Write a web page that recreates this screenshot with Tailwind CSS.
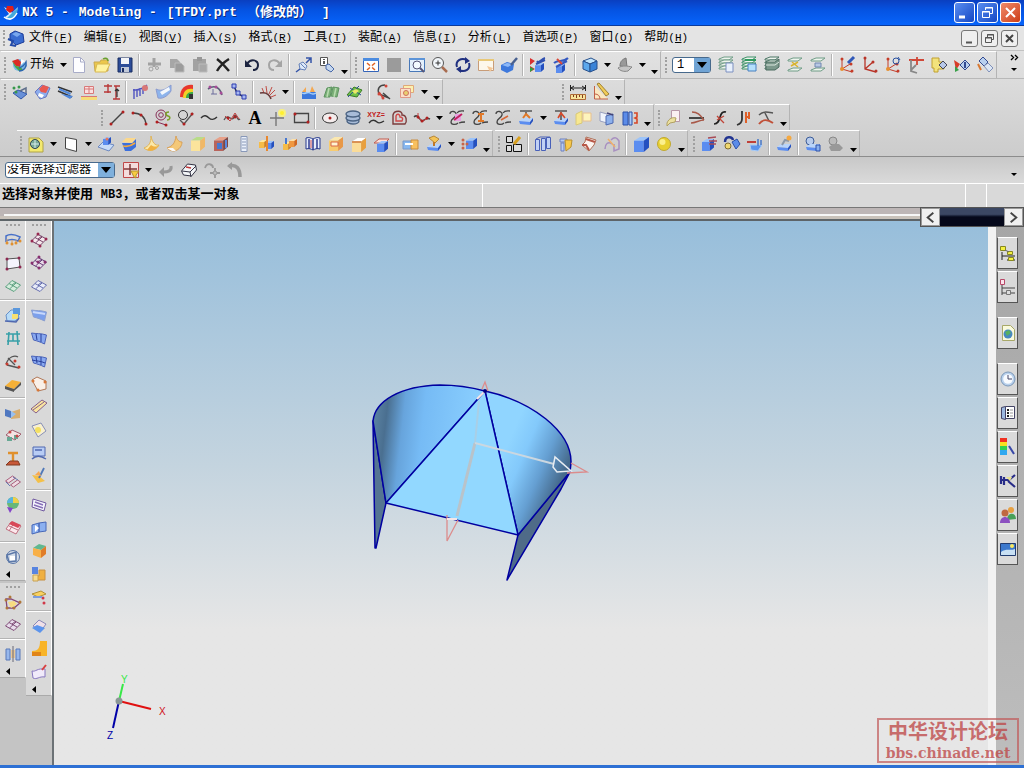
<!DOCTYPE html>
<html lang="zh-CN">
<head>
    <meta charset="utf-8" />
    <title>NX 5 - Modeling</title>
    <script src="https://cdn.jsdelivr.net/npm/@tailwindcss/browser@4"></script>
</head>

<body class="h-screen flex flex-col overflow-hidden bg-[#d3d3d3] text-black text-[12px] font-['Liberation_Mono','Noto_Sans_CJK_SC',monospace]">

    <!-- title bar -->
    <header class="h-[26px] shrink-0 flex items-center pl-0.5 pr-[3px] bg-linear-to-b from-[#0a3fc0] via-[#0553e2] via-40% to-[#0764fb] border-b border-[#0a3a9c] text-white">
        <span data-icon="nx" class="w-[18px] h-[18px]"></span>
        <h1 class="flex gap-2.5 pl-0.5 text-[13px] leading-none font-bold whitespace-pre [text-shadow:1px_1px_#0a2a80]"><span>NX 5 -</span><span>Modeling -</span><span>[TFDY.prt</span><span>（修改的）</span><span>]</span></h1>
        <div class="ml-auto flex gap-0.5">
            <button aria-label="最小化" class="w-[21px] h-[21px] rounded-[3px] border border-white bg-linear-to-br from-[#5a8df0] to-[#1546c4]"><svg viewBox="0 0 19 19"><path d="M4 14h6" stroke="#fff" stroke-width="3"/></svg></button>
            <button aria-label="还原" class="w-[21px] h-[21px] rounded-[3px] border border-white bg-linear-to-br from-[#5a8df0] to-[#1546c4]"><svg viewBox="0 0 19 19" fill="none" stroke="#fff"><path d="M7.500 7V4.500h7v6h-3M4.500 8.500h7v6h-7zM4 9h8M7 5h8"/></svg></button>
            <button aria-label="关闭" class="w-[21px] h-[21px] rounded-[3px] border border-white bg-linear-to-br from-[#f08a68] to-[#cc3a10]"><svg viewBox="0 0 19 19"><path d="M5 5l9 9M14 5l-9 9" stroke="#fff" stroke-width="2"/></svg></button>
        </div>
    </header>

    <!-- menu bar -->
    <nav class="h-6 shrink-0 flex items-center pl-[3px] pr-1.5 bg-[#e4e4e4]">
        <span class="w-1 h-4 border-l-2 border-dotted border-[#a0a0a0]"></span>
        <span data-icon="part" class="w-[18px] h-[18px]"></span>
        <div id="menus" class="flex gap-[11px] pl-1"></div>
        <div class="ml-auto flex gap-[3px]">
            <button aria-label="最小化窗口" class="w-[17px] h-[17px] rounded-[3px] border border-[#777] bg-[#efefef]"><svg viewBox="0 0 15 15"><path d="M4 11.500h6" stroke="#555" stroke-width="2"/></svg></button>
            <button aria-label="还原窗口" class="w-[17px] h-[17px] rounded-[3px] border border-[#777] bg-[#efefef]"><svg viewBox="0 0 15 15" fill="none" stroke="#555"><path d="M5.500 6V3.500h6v5h-2M3.500 6.500h6v5h-6zM3 7h7M5 4h7"/></svg></button>
            <button aria-label="关闭窗口" class="w-[17px] h-[17px] rounded-[3px] border border-[#777] bg-[#efefef]"><svg viewBox="0 0 15 15"><path d="M4 4l7 7M11 4l-7 7" stroke="#444" stroke-width="2"/></svg></button>
        </div>
    </nav>

    <!-- toolbars -->
    <div class="shrink-0 bg-linear-to-b from-[#e2e2e2] to-[#cccccc]">
        <div class="h-7 flex gap-px pl-px border-t border-[#c2c2c2]">
            <div data-bar="start new open save | cut copy paste delete | undo redo | orient info end"></div>
            <div data-bar="fit blank zoomwin zoom rotate pan shade | replay replay2 | cube drop section drop end"></div>
            <div data-bar="layer layers layers2 layers3 layers4 layers5 | csys csys1 csys2 csys3 csys4 csys5 csys6"></div>
            <div class="ml-auto w-5 flex flex-col items-center pt-0.5">
                <svg class="w-4 h-5" viewBox="0 0 16 20"><path d="M5 2l2.500 2.500L5 7M9 2l2.500 2.500L9 7" fill="none" stroke="#000" stroke-width="1.400"/><path d="M5 15h6l-3 3z"/></svg>
            </div>
        </div>
        <div class="h-[26px] flex pl-px gap-[116px] border-t border-[#b8b8b8]">
            <div data-bar="feat1 feat2 feat3 feat4 dims | comb blend rainbow | arcpt nodes | fan drop | pool greens leaf | hook tags drop end"></div>
            <div data-bar="measure angle end"></div>
        </div>
        <div class="h-[26px] flex gap-px pl-[98px]">
            <div data-bar="line arc spiral tangent wave spline text point rect | ellipse helix law offset wave2 drop bridge bridge2 bridge3 project drop project2 mirror wrap extract end"></div>
            <div data-bar="editcv trim divide stretch smooth end"></div>
        </div>
        <div class="h-[26px] flex gap-0.5 pl-[17px]">
            <div data-bar="sketch drop plane drop extrude revolve sweep sweep2 block hole slot boss rib book pocket shell chamfer | thread emboss drop pattern end"></div>
            <div data-bar="group | split thicken patch patch2 | bluebox ball end"></div>
            <div data-bar="unite subtract intersect | stamp | gears gearsoff end"></div>
        </div>
    </div>

    <!-- selection filter -->
    <div class="h-[27px] shrink-0 flex items-center pl-[5px] pr-0.5 border-t border-[#8c8c8c] bg-linear-to-b from-[#c8c8c8] to-[#dadada]">
        <div class="relative w-[110px] h-4">
            <select aria-label="选择过滤器" class="block appearance-none w-full h-4 rounded-[3px] border border-[#47698c] bg-white pl-px text-[12px] leading-3"><option>没有选择过滤器</option></select>
            <svg class="absolute right-px top-px w-4 h-3.5 pointer-events-none" viewBox="0 0 16 14"><path fill="#7fb0dc" d="M0 0h16v14H0z"/><path d="M3 4h10l-5 6z"/></svg>
        </div>
        <div data-tools="filter drop back eraser snap snap2" class="flex items-center h-full pl-1"></div>
        <svg class="ml-auto w-4 h-4" viewBox="0 0 16 16"><path d="M5 11h6l-3 3z"/></svg>
    </div>

    <!-- prompt -->
    <div class="h-6 shrink-0 flex border-t border-white bg-[#d9d9d9]">
        <p class="w-[483px] pl-0.5 text-[13px] leading-[22px] font-bold border-r border-white whitespace-nowrap">选择对象并使用 <span class="text-[12px]">MB3</span>，或者双击某一对象</p>
        <p class="flex-1"></p>
        <p class="w-[21px] border-l border-white"></p>
        <p class="w-[38px] border-l border-white"></p>
    </div>

    <div class="relative h-[14px] shrink-0 border-t border-[#777] bg-[#bdb6b6] flex flex-col justify-end">
        <i class="h-0.5 bg-[#f6f6f6] ml-1"></i>
        <i class="h-[3px] bg-[#c9c2ba]"></i>
        <i class="h-0.5 bg-[#5d6468]"></i>
        <div class="absolute right-0 -top-px z-10 w-[104px] h-5 flex border border-[#555] bg-linear-to-b from-[#3b4763] from-35% to-[#05081a] to-50%">
            <button aria-label="向左" class="w-[19px] bg-[#f0f0f0] border border-[#999]"><svg viewBox="0 0 18 18"><path d="M12 4L6 9l6 5" fill="none" stroke="#444" stroke-width="2"/></svg></button>
            <button aria-label="向右" class="ml-auto w-[19px] bg-[#f0f0f0] border border-[#999]"><svg viewBox="0 0 18 18"><path d="M6 4l6 5-6 5" fill="none" stroke="#444" stroke-width="2"/></svg></button>
        </div>
    </div>

    <main class="relative flex-1 min-h-0 flex border-b-[3px] border-[#2d70d4]">
        <!-- left docks -->
        <div class="w-[54px] shrink-0 flex bg-[#c4c4c4] border-r-2 border-[#6c7276]">
            <div class="w-[26px] flex flex-col gap-0.5">
                <div data-dock="v1 v2 v3 | v4 v5 v6 v7 | v8 v9 v10 v11 v12 v13 | v14 end"></div>
                <div data-dock="v15 v16 | v17 end"></div>
            </div>
            <div class="w-[26px] flex flex-col">
                <div data-dock="w1 w2 w3 | w4 w5 w6 w7 w8 w9 w10 w11 | w12 w13 w14 w15 w16 | w17 w18 w19 end"></div>
            </div>
        </div>

        <!-- graphics window -->
        <div class="flex-1 min-w-0 bg-linear-to-b from-[#97bedb] via-[#c4d4df] via-45% to-[#e6e6e6] to-75%">
            <svg class="w-full h-full" viewBox="54 221 934 544" preserveAspectRatio="xMinYMin meet">
                <defs>
                    <linearGradient id="gl" gradientUnits="userSpaceOnUse" x1="373" y1="440" x2="478" y2="452">
                        <stop offset="0" stop-color="#587f9f"/><stop offset=".1" stop-color="#4a6f90"/><stop offset=".26" stop-color="#67a4dc"/><stop offset=".45" stop-color="#76bbf5"/><stop offset="1" stop-color="#8bd0ff"/>
                    </linearGradient>
                    <linearGradient id="gr" gradientUnits="userSpaceOnUse" x1="503" y1="455" x2="561" y2="480">
                        <stop offset="0" stop-color="#90d5ff"/><stop offset=".3" stop-color="#83c9fb"/><stop offset=".65" stop-color="#659fd2"/><stop offset="1" stop-color="#466a8c"/>
                    </linearGradient>
                </defs>
                <g stroke="#0000a0" stroke-width="1.500" stroke-linejoin="round">
                    <path fill="#557592" d="M373 421l2 127h1l10-45z"/>
                    <path fill="#4f6b88" d="M518 535l-11 45 54-91 9-17z"/>
                    <path fill="url(#gl)" d="M373 421c2-20 27-35 67-36 16 0 30 2 45 6L386 503z"/>
                    <path fill="url(#gr)" d="M485 391c46 10 87 40 86 72l-1 9-52 63z"/>
                    <path fill="#92d8ff" d="M485 391L386 503l132 32z"/>
                </g>
                <g fill="none">
                    <path d="M475 443l-18 73" stroke="#b9c3ca" stroke-width="3"/>
                    <path d="M475 443l4-42" stroke="#a9cfe6" stroke-width="2"/>
                    <path d="M475 443l79 21" stroke="#cbd7e0" stroke-width="2"/>
                    <path d="M555 457l-2 10 4 5 14-1z" stroke="#e8edf2" stroke-width="1.500"/>
                    <path d="M571 463l16 9-20 1M447 515v26l11-21M482 389l3-7 3 9" stroke="#dc8c8c" stroke-width="1.300"/>
                    <path d="M486 390l-9 9M447 519h10" stroke="#f6e6e6" stroke-width="2"/>
                </g>
                <circle cx="485" cy="391" r="2" fill="#000080"/>

                <g stroke-width="2">
                    <path d="M119 701l32 8" stroke="#e01010"/><path d="M119 701l4-17" stroke="#38e848"/><path d="M119 701l-6 27" stroke="#0000a8"/>
                </g>
                <circle cx="119" cy="701" r="3.500" fill="#8b9796"/>
                <g class="text-[10px] font-['Liberation_Sans',sans-serif]">
                    <text x="159" y="715" fill="#d01020">X</text><text x="121" y="683" fill="#38e848">Y</text><text x="107" y="739" fill="#0000a8">Z</text>
                </g>
            </svg>
        </div>

        <!-- resource bar -->
        <div class="w-9 shrink-0 border-l-[8px] border-[#f2f2f2] bg-linear-to-b from-[#a6a6a6] to-[#bdbdbd] pt-4 pl-px flex flex-col gap-3.5">
            <div data-tabs="navasm navpart" class="flex flex-col gap-0.5"></div>
            <div data-tabs="web" class="flex flex-col gap-0.5"></div>
            <div data-tabs="clock roles palette process people scene" class="flex flex-col gap-0.5"></div>
        </div>

        <!-- forum stamp -->
        <div class="absolute right-[5px] bottom-0.5 w-[142px] h-[45px] border-2 border-[#c05a5a]/70 text-[#bd4444]/75 flex flex-col items-center justify-center font-bold">
            <p class="text-[20px] leading-6 font-['Noto_Sans_CJK_SC',sans-serif]">中华设计论坛</p>
            <p class="text-[14px] leading-5 font-['DejaVu_Serif',serif]">bbs.chinade.net</p>
        </div>
    </main>

    <script>
        // stroke, fill and dot helpers for the 18x18 icons
        const p = (d, s = '#333', w = 1) => `<path d="${d}" fill="none" stroke="${s}" stroke-width="${w}"/>`
        const a = (d, f, s = 'none') => `<path d="${d}" fill="${f}" stroke="${s}"/>`
        const o = (x, y, r, f, s = 'none') => `<circle cx="${x}" cy="${y}" r="${r}" fill="${f}" stroke="${s}"/>`
        const dots = (list, f) => list.map(([x, y]) => o(x, y, 1.5, f)).join('')
        const BLUE = ['#9cc4fa', '#5b8df0', '#2450c0'], GOLD = ['#ffe9a0', '#f6bc48', '#cf8220']
        const box = (x, y, s, c = BLUE) => a(`M${x} ${y + s * .25}l${s * .4}-${s * .25}h${s * .6}l-${s * .35} ${s * .25}z`, c[0]) +
            a(`M${x} ${y + s * .25}h${s * .65}v${s * .75}h-${s * .65}z`, c[1]) + a(`M${x + s * .65} ${y + s * .25}l${s * .35}-${s * .25}v${s * .7}l-${s * .35} ${s * .3}z`, c[2])
        const tray = (f = '#5b8df0') => a('M2 12l4-3h10l-3 4z', '#b8d4fa') + a('M2 12l11 1v3L3 15z', f) + a('M13 13l3-4v3l-3 4z', '#2450c0')
        const sheet = (f, s) => a('M1.500 10L8 3.500 16.500 8 10 14.500z', f, s)
        const mesh = (f, s) => sheet(f, s) + p('M5 6.500l8 4.500M12 6l-6.500 6M8 8l4-3', s)
        const curved = (f, s) => a('M1.500 4c5 1 9 0 15 2l-2 9c-4-2-7-3-11-4z', f, s)
        const layers = (c = '#6f9c86') => [3, 6, 9, 12].map(y => a(`M2 ${y}l5-2h9l-4 3H2z`, '#eef4ee', c)).join('')
        const axes = (c = '#c43c28') => p('M4 3v10l10 3M4 13l8-5', c) + dots([[4, 3], [13, 8], [14, 15]], c) + o(4, 13, 2, '#e89030')
        const curl = p('M2 5c0-4 7-3 6 1S3 9 3 13c0 3 5 3 7 1M9 4c2-3 5-2 7-2M11 14c2-1 4-1 6-1', '#444', 1.3)

        const icons = {
            nx: a('M2 3l6 3 2 3 6-6-2 7-6 6-5-3 4-3z', '#d8eefc') + a('M5 2h6l1 4-4 3-4-3z', '#e0201c') + a('M10 9l6-5-1 5-5 6-5-1z', '#43a9dc') + p('M2 13c5 4 10 2 13-4', '#fff', 1.5),
            globe: o(9, 9, 6, '#78b8e8') + a('M2 5l6-2 3 3-1 5-4-1z', '#dc2c24') + a('M2 5l3 6 4 4 4 0-2-4-5-1z', '#48a848') + p('M9 15c5 0 8-4 7-9-2 4-4 5-7 6', '#2c68b0', 1.5) + a('M11 3l4 2-4 4z', '#fff'),
            part: a('M3 5l5-3 8 3 1 8-8 3-6-5z', '#3a6cd0', '#1c3c98') + a('M5 5l4-2 5 2-4 3z', '#7aa8ee') + p('M1 10l5 2-2 4 5 1', '#234aa8', 2),
            new: a('M3.500 1.500h7l4 4v11h-11z', '#fdfdff', '#a8acc8') + p('M10.500 2v4h4', '#a8acc8'),
            open: a('M1 6h6l1-2h7v11H2z', '#ecc84c', '#c8a850') + a('M4 8h13l-4 8H2z', '#fff3a0', '#d8b850') + p('M10 3c3-2 5 0 5 2', '#68a030', 1.5),
            save: a('M2 2h14v14H2z', '#2c4c98', '#182c60') + a('M5 2h8v6H5z', '#f2f4f8') + a('M5 11h8v5H5z', '#c0c8d8') + a('M6 12h2v4H6z', '#182c60'),
            cut: p('M9 2v9M3 8h13', '#a2a2a2', 3) + o(6, 13, 2, 'none', '#a2a2a2') + o(12, 12, 1.5, 'none', '#a2a2a2'),
            copy: a('M2 3h7l3 3v6H2z', '#a6a6a6') + a('M7 7h6l3 3v6H7z', '#9c9c9c', '#bbb'),
            paste: a('M2 3h13v12H2z', '#a2a2a2') + a('M6 1h5v4H6z', '#979797') + a('M8 8h8v8H8z', '#a8a8a8', '#bbb'),
            delete: p('M3 3c4 3 8 7 12 12M15 3C10 6 6 10 3 15', '#222', 2.4),
            undo: p('M4 8c4-6 11-4 11 1 0 3-2 5-5 5', '#1c2440', 2) + a('M2 4v7h7z', '#1c2440'),
            redo: p('M14 8C10 2 3 4 3 9c0 3 2 5 5 5', '#a4a4a4', 2) + a('M16 4v7H9z', '#a4a4a4'),
            orient: a('M4 8l4-2 4 4-2 4-5-1z', '#dce8f8', '#6480b8') + p('M1 16l4-3M11 7l5-5M11 2h5v5', '#3454a8', 1.5) + p('M6 8l4 4', '#6480b8'),
            info: a('M2.500 1.500h7v8h-7z', '#fff', '#555') + p('M6 3v1M6 5v3', '#222', 1.5) + a('M8 9l3-1 5 5-3 3-5-3z', '#c4d6ee', '#4868a8'),
            fit: a('M1.500 2.500h15v13h-15z', '#fff', '#3464b8') + a('M1 2h16v3H1z', '#4c8ce0') + p('M5 7l8 7M13 7l-8 7', '#e06020', 1.5) + o(9, 10.500, 1.5, '#fff'),
            blank: a('M2 2h14v14H2z', '#9b9b9b'),
            zoomwin: a('M1.500 2.500h15v13h-15z', '#e4f0fc', '#4878b8') + a('M1 2h16v2H1z', '#5c94d8') + o(9, 9, 4, '#f4faff', '#557') + p('M12 12l4 4', '#557', 2),
            zoom: o(7, 7, 5.5, '#f2f6fa', '#555') + p('M4.500 7h5M7 4.500v5', '#333') + p('M11 11l5 5', '#a86c50', 2.5),
            rotate: p('M3 11C1 5 7 1 13 4M15 7c2 6-4 10-10 7', '#203080', 2) + a('M11 1l5 4-5 3zM7 17l-5-4 5-3z', '#203080'),
            pan: a('M1.500 3.500h15v11h-15z', '#fdf8ec', '#c89c78') + a('M1 3h16v2H1z', '#e8c878') + a('M10 10l6 2-3 4z', '#f4c898'),
            shade: a('M1 9l6-3 7 2-1 6-6 3-6-3z', '#3d78dc') + a('M2 9l5-2 6 1-5 3z', '#8cb8f8') + p('M11 9l6-7', '#486090', 2.5),
            replay: a('M1 2l5 3-5 4zM1 10l5 3-5 3z', '#d83030') + a('M1 11l4 2-4 3z', '#30a040') + box(6, 7, 9) + p('M8 5c2 3 4-2 8-3M7 8l9-4', '#3050b0', 2),
            replay2: box(4, 8, 9) + p('M2 7c4-4 9 0 14-5M4 11l11-6', '#3458c0', 2) + p('M5 3l5 5', '#d84838', 2),
            cube: a('M2 5l8-3 6 3-7 3z', '#c0e4fc', '#28508c') + a('M2 5l7 3v8l-7-3z', '#5ca8ec', '#28508c') + a('M9 8l7-3v8l-7 3z', '#3a84d8', '#28508c'),
            section: a('M4 10c0-5 3-7 6-8l1 9z', '#999', '#777') + a('M2 12c4-3 10-2 14-1l-4 4c-4 1-8 0-10-3z', '#c4c4c4', '#888'),
            layers: layers() + a('M9 7h7v9H9z', '#e8f0fc', '#7c90c0'),
            layers2: layers('#3c9068') + a('M8 8h8v7H8z', '#b4e0fc', '#4880c0') + p('M5 4h11', '#2f9a60', 2),
            layers3: layers('#4a7464') + a('M3 6h9l4-3v8l-4 3H3z', '#7c988c', '#4c6c60') + p('M3 9h9l4-3', '#dce8e0'),
            layers4: a('M2 4l5-2h9l-4 3H2zM2 14l5-2h9l-4 3H2z', '#eef4ee', '#6f9c86') + p('M6 6l6 5M12 6l-7 4', '#d8b430', 1.5),
            layers5: a('M2 4l5-2h9l-4 3H2zM2 14l5-2h9l-4 3H2z', '#eef4ee', '#6f9c86') + a('M6 7h6v4H6z', '#b8c8e4', '#7088b0'),
            csys: axes() + p('M10 7l6-6', '#3058b8', 3), csys1: p('M4 2v11l11 3M4 13l8-7', '#b83428', 1.3) + dots([[4, 2], [12, 6], [15, 15]], '#b83428'),
            csys2: axes() + o(12, 5, 3, 'none', '#2850a0') + p('M14 1l2 3', '#2850a0'), csys3: p('M2 4h15M10 1v8', '#d04838', 1.8) + p('M4 4v11l6 2M4 14l5-5', '#888', 1.8),
            csys4: a('M2 2h7v4h5v7H8v3H4v-4H2z', '#f2e27c', '#c0a030') + a('M9 9l4-4 4 4-4 4z', '#b8c8e8', '#445'),
            csys5: a('M1 4l6 4-4 6z', '#d83c28') + a('M2 10l4 4-4 2z', '#38a048') + a('M7 9l5-5 5 5-5 5z', '#b8d0f0', '#344a90') + p('M12 6v6', '#344a90', 2),
            csys6: a('M3 5l4-4 5 5-4 4z', '#b8d0f0', '#344a90') + a('M8 10l4-3 5 5-4 4z', '#dce6f4', '#8090b8') + p('M2 8l3 6', '#d87830', 2),

            feat1: a('M2 10l5-3 9 4-6 5z', '#6890d8', '#3458a8') + dots([[3, 5], [8, 4], [5, 9]], '#38984c') + p('M9 8l6-3v5', '#60708c', 1.5),
            feat2: a('M1 9l7-7 8 3-4 9-6 2z', '#8cacec', '#6878c0') + a('M5 6l4-4 6 2-3 6-5-1z', '#e85850') + a('M5 10l5 2-2 3-4-2z', '#fff'),
            feat3: p('M1 4l14 5M1 8l14 6', '#333', 1.5) + a('M2 5l12 5-1 2L2 7zM4 11l12 2-3 3z', '#5088dc'),
            feat4: a('M4.500 3.500h9v7h-9z', '#fbe0e0', '#d87878') + p('M1 13.500h16M4 6h9M9 4v7', '#d87878') + a('M1 14h16v3H1z', '#f6dc78'),
            dims: p('M1 3h8M5 1v9M1 9h7M11 3h6M13 3v13M10 16h7', '#b83838', 1.4) + p('M14 6v8M12 8l2-2 2 2', '#333', 1.2),
            comb: p('M2 6v10M5 6v8M8 5v8M11 4v7M14 2v5M1 7c6 0 10-1 14-5', '#5054c0', 1.4) + o(13, 5, 3, '#d87878'),
            blend: a('M1 6c6 3 10 0 15-4v6c-4 6-9 8-13 7z', '#8cb4ec', '#8c9cd0') + a('M5 9l9-5 1 3-8 5z', '#f4f8fc'),
            rainbow: a('M2 14C2 5 8 1 15 2v13z', '#e8382c') + a('M5 15c0-7 4-10 10-9v9z', '#f4d028') + a('M8 15c0-5 3-6 7-6v6z', '#3cac48') + a('M11 11h4v5h-4z', '#333'),
            arcpt: p('M1 6c7-5 12-1 14 6', '#5c5c78', 1.6) + dots([[3, 4], [9, 4], [14, 10]], '#a84c98') + p('M6 6v5M4 11h6', '#6c6c9c'),
            nodes: p('M4 3l3 7 7 4', '#222c68', 1.5) + a('M2 1h4v4H2zM6 8h4v4H6zM12 12h4v4h-4z', '#a8b8f0', '#2c3cb0'),
            fan: p('M5 10L3 5M8 10L7 3M10 11l3-7M11 12l5-5M12 14l5-2', '#c04c44') + p('M1 10c5-1 9 0 11 6', '#663838', 1.5),
            pool: a('M2 9h14v7H2z', '#3c78dc') + a('M2 9l4-5v5zM10 9l2-6 3 6z', '#f4a850') + p('M2 10c3 2 5-2 8 0s4 1 6 0', '#a8d0f8', 1.5),
            greens: a('M1 14L4 5l5-1-2 10zM8 13l2-9 6 1-2 9z', '#7cb078', '#5c9460') + p('M6 5L4 14M13 5l-2 9', '#b8dcb0', 1.5),
            leaf: a('M1 12l7-8 8 3-5 7z', '#70c048', '#3c7c28') + p('M2 14l11-11M4 5l11 7', '#2c5494') + a('M6 8l4-2 3 2-4 3z', '#ece868'),
            hook: p('M10 2C4 2 2 6 4 11l10 4M8 10l7 6', '#444', 1.5) + dots([[11, 3], [4, 11], [8, 15]], '#d04438') + p('M4 9l4 6', '#d04438', 1.5),
            tags: a('M5.500 2.500h10v7h-10z', '#fbf0b0', '#e0a878') + a('M2.500 5.500h10v9h-10z', '#fadfc8', '#e09888') + o(8, 10, 2.5, '#e8d070', '#d07060'),
            measure: p('M1.500 2v6M16.500 2v6M2 5h14M5 3L2 5l3 2M13 3l3 2-3 2', '#222') + a('M1.500 11.500h15v5h-15z', '#f8e49c', '#b06c38') + p('M4.500 12v2M7.500 12v3M10.500 12v2M13.500 12v3', '#803c20'),
            angle: a('M2.500 3v13H16', '#fbe8c0', '#c06048') + a('M5 1l2-1 10 11-3 2z', '#f0cc58', '#a08030') + p('M3 11c3 0 5 2 5 5', '#c06048'),

            line: p('M3 15L15 3', '#444', 1.4) + dots([[3, 15], [15, 3]], '#b02020'),
            arc: p('M2 4c8 0 12 4 13 11', '#444', 1.4) + dots([[2, 4], [10, 6], [15, 15]], '#b02020'),
            spiral: o(7, 6, 5, 'none', '#883058') + o(7, 6, 2.3, 'none', '#883058') + p('M3 13l9 3', '#883058') + p('M15 3c-4 0-4 3-1 4s2 4-1 4', '#7aa028', 1.5) + dots([[3, 13], [12, 16]], '#b02020'),
            tangent: o(6, 6, 4.5, 'none', '#333') + p('M16 4l-9 11-4-4', '#555', 1.3) + dots([[15, 5], [7, 15]], '#b02020'),
            wave: p('M1 9c3-4 6-2 8 0s5 2 8-1', '#333', 1.4),
            spline: p('M1 11c4-8 8 3 10-3s3 5 6 2', '#555', 1.3) + p('M2 7l5 5 5-8 4 6', '#c04040') + dots([[5, 9], [12, 8]], '#b02020'),
            text: '<text x="9" y="15" text-anchor="middle" font-family="Liberation Serif" font-weight="bold" font-size="18">A</text>',
            point: p('M1 9h14M7 3v14', '#777', 1.4) + o(13, 4, 4, '#f8f080') + o(13, 4, 2, '#fff030'),
            rect: p('M2.500 4.500h14v9h-14z', '#444', 1.3) + dots([[3, 5], [16, 13]], '#b02020'),
            ellipse: '<ellipse cx="9" cy="9" rx="7.500" ry="5" fill="#f4ecec" stroke="#333"/>' + o(9, 9, 1.5, '#b02020'),
            helix: '<g fill="#a8bcd8" stroke="#4c6484" stroke-width="1.400"><ellipse cx="9" cy="12" rx="6" ry="3"/><ellipse cx="9" cy="9" rx="7" ry="3"/><ellipse cx="9" cy="5" rx="7" ry="3"/></g>',
            law: '<text x="9" y="8" text-anchor="middle" font-family="Liberation Sans" font-weight="bold" font-size="7" fill="#c02020">XYZ=</text>' + p('M2 14c3-4 6-3 8-1s4 1 7-1', '#333', 1.4),
            offset: p('M3 15V6c1-5 10-5 9 0 5 0 5 7 3 9z', '#7c3c3c', 1.4) + p('M6 12V7c1-3 4-2 4 1 3 0 3 2 2 4z', '#d04848', 1.4),
            wave2: p('M1 8c4-4 6 4 8 4s4-4 8-2', '#444', 1.5) + p('M5 4v5l5 3 5-3', '#c04040') + dots([[5, 8], [9, 12], [14, 9]], '#b02020'),
            bridge: curl + a('M7 5h6v7H7z', '#e8a0e0') + p('M6 11l8-6', '#c02060', 2), bridge2: curl + p('M10 5v8M7 12h6M7 5h6', '#e07828', 2), bridge3: curl + p('M7 11l7-4', '#d86838', 1.6),
            project: tray() + p('M3 2h12M9 3v3', '#555', 1.6) + p('M6 9l3-4 4 4', '#e07828', 2), project2: tray() + p('M3 2h12M9 3v8', '#555', 1.6) + p('M6 9l3-5 4 5', '#d84828', 1.6),
            mirror: a('M1 5l6-3v12l-6 2z', '#f8e890', '#d8c878') + a('M8 4h8v8H8z', '#fdf4bc', '#e8c090'), wrap: a('M2 3l7 2v9l-7-2z', '#f0f4fc', '#98a0c0') + a('M8 7l7-2v9l-7 2z', '#8cb0ec', '#4c68b0') + p('M9 4l6 2', '#447', 1.5),
            extract: a('M2 3h5v13H2z', '#5c8ce8', '#2c50a8') + a('M8 3h3v13H8z', '#a8c8f8', '#2c50a8') + p('M13 4h3v4l-2 1 2 1v4h-3', '#d84828', 1.6),
            editcv: a('M6.500 1.500h8v11h-8z', '#fbf0f2', '#b898a8') + a('M2 14c2-5 6-6 9-5l-1 4-5 1-3 3z', '#ece0a0', '#b0a060'),
            trim: p('M1 9h15', '#222', 1.6) + p('M3 14c5 0 8-3 13-3M4 3c6 0 8 3 12 8', '#a85848', 1.5), divide: p('M15 3c-8-2-4 12-12 12', '#222', 1.7) + p('M6 7l7 7M13 7l-7 4', '#c04438', 1.3),
            stretch: p('M8 2v8c0 4-2 5-5 6', '#333', 1.8) + p('M12 3v11M15 3v7M11 8h5', '#e06028', 2), smooth: p('M2 6c4-4 8-3 14-2M8 4l4 8', '#555', 1.5) + p('M2 15c4-5 8-5 14-1', '#c05038', 2),

            sketch: a('M2 3h10l4 4v10H2z', '#f4ea70', '#b0a448') + o(8, 9, 4.500, '#78a898', '#345') + p('M8 5v8M4 9h8', '#d8ecec'),
            plane: a('M3.500 2.500l11 2v12l-11-3z', '#fff', '#444'),
            extrude: a('M1 12l5-5 11 3-5 6z', '#c8dcf8', '#6c88c0') + box(6, 2, 8) + o(10, 4, 1.500, '#e87858'), revolve: a('M2 8h10l4-4v8l-5 4H5z', '#3c70dc') + a('M2 7l4-4h10l-4 5z', '#fbd88c') + p('M3 11c4 1 8 0 12-3', '#f4a840', 1.600),
            sweep: a('M8 1c0 7-2 10-7 12 4 4 12 3 15-3-4 1-7-3-8-9z', '#fbe8a8', '#e0b458') + a('M8 10c4 3 7 1 8 0-3 5-8 7-12 5z', '#f0b040'), sweep2: a('M10 1c-1 7-3 10-9 12 2 2 4 3 7 3 6-1 8-6 8-9-3 0-5-2-6-6z', '#f4c878', '#d8a058') + a('M1 13l6 0 3 3H6z', '#fafafa'),
            block: box(2, 2, 14, ['#b8dc88', '#fbe49c', '#f0b868']), hole: box(2, 2, 14, ['#e8a088', '#b8645c', '#7c4848']) + a('M5 8h5v6H5z', '#4878d0') + p('M14 5v8', '#5c88dc', 2),
            slot: a('M6 1.500h6v15H6z', '#eaf0fa', '#8898b8') + p('M7 4h4M7 7h4M7 10h4M7 13h4', '#8898b8'),
            boss: box(1, 5, 8, GOLD) + box(8, 6, 8) + p('M9 1v15', '#e88830', 2), rib: box(2, 7, 8, GOLD) + box(8, 4, 8, ['#fde0a8', '#f09840', '#d06820']) + p('M5 3v6', '#4878d0', 2),
            book: a('M2 3c3-1 5 0 7 1 2-1 4-2 7-1v11c-3-1-5 0-7 1-2-1-4-2-7-1z', '#e8eefc', '#26398c') + p('M9 4v11M5 4v10M13 4v10', '#303c90', 1.5) + p('M7 5v8', '#d05050'),
            pocket: box(2, 2, 14, ['#fbe8b0', '#f8cc70', '#e89848']) + a('M4 7h7v4H4z', '#fff4d0', '#d86848'), shell: box(2, 3, 14, ['#fff', '#fbdc98', '#e8a040']) + p('M2 7h9', '#d07838', 1.5),
            chamfer: a('M1 8l5-4h10l-4 4z', '#fde0d8', '#c05c50') + box(4, 6, 11),
            bluehole: box(2, 2, 14) + a('M5 7h5v6H5z', '#f0a048') + p('M2 12l6-3', '#804018', 2),
            thread: a('M1 6h9v8H1z', '#88b8f0', '#7898c8') + a('M9 5h7v9H9z', '#f8c060', '#c88c40') + p('M3 9h8', '#fff', 2),
            emboss: tray() + a('M4 3l5-2 5 3-4 4z', '#f4c458', '#b88838') + p('M9 7v4', '#c07828', 2), pattern: box(6, 3, 11) + dots([[3, 5], [3, 9], [3, 13], [7, 9]], '#c86448'),
            group: a('M1.500 1.500h6v6h-6zM1.500 10.500h5v6h-5zM8.500 9.500h8v7h-8z', '#ddd', '#111') + p('M9 9l6-7', '#d8a020', 3),
            split: a('M1.500 4.500h4v11h-4zM7.500 3.500h4v12h-4zM12.500 2.500h4v11h-4z', '#c0d0f4', '#4860b8') + p('M2 4l4-2h10', '#4860b8'),
            thicken: a('M3 4h7v3H3zM4 8h3v8H4z', '#b8ccf4', '#6c80c0') + a('M8 5h7l-1 7-5 4z', '#f8c84c', '#b89030'), patch: a('M2 10l3-3 1-5 10 3-2 5-5 6z', '#fbf4f0', '#b07058') + p('M2 10l4 0 3 5M6 4l9 3', '#b85848', 2), patch2: p('M2 14c0-5 3-8 7-5M8 5c4-4 6-2 8 1v8l-5 2V9', '#a890c0', 1.5) + p('M5 4l7 8', '#f0b068', 1.5),
            bluebox: box(2, 2, 15), ball: o(9, 9, 6.500, '#e8d030', '#c0a830') + o(7.500, 7, 3, '#fbf08c'),
            unite: box(2, 4, 12) + p('M8 3l8-1M9 6l8 0M9 9h7', '#a84c58', 1.3), subtract: p('M2 7c0-6 7-6 8-2', '#223490', 2.400) + o(5, 11, 3, '#f0d870', '#806c30') + a('M9 7l5-3 3 5-4 5z', '#5c8ce8', '#2c50a8'),
            intersect: a('M4 10h12l-4 6-7-1z', '#5c94ec', '#a8ccf8') + p('M1 7h9', '#c04038', 2) + p('M12 4v7M15 5v5', '#4878c8', 1.5),
            stamp: tray() + p('M7 10l3-5 4 1', '#8c98a8', 2) + o(14, 3, 2.500, '#f4a840'),
            gears: o(6, 6, 4, '#b8ccec', '#3c5c98') + tray() + a('M12 10h4v6h-4z', '#88b0f0', '#2c50a8'), gearsoff: o(6, 6, 4, '#bbb', '#888') + a('M2 12l4-3h6l4 4-3 3H4z', '#999'),
            filter: a('M1.500 1.500h15v15h-15z', '#f4dcdc', '#c04848') + p('M8 3v11M2 8h13', '#803838', 1.5) + a('M9 10h8l-3 4v3l-2-1z', '#f8cc40', '#b09030'),
            back: p('M14 5c1 5-3 6-8 6', '#999', 3) + a('M2 11l5-5v10z', '#999'), eraser: a('M1.500 10l6-7 8 1 1 5-5 6-8-1z', '#f4f6f8', '#334') + p('M2 10l8 1 6-6M10 11l1 5', '#334') + p('M6 6l5 1', '#c03838', 1.500),
            snap: p('M2 7c2-6 8-4 8 0M12 7v10M7 12h10', '#999', 1.800) + o(12, 12, 2, '#bbb', '#999'), snap2: p('M3 5c8-2 11 3 11 11', '#999', 3.500) + a('M1 5l5-4v8z', '#999'),

            v1: p('M2 5c5-3 10-1 14 1l-2 4c-4-2-8-2-12 0z', '#4870c8', 1.500) + p('M3 8v5M8 9v5M12 9v4', '#d8a060') + dots([[3, 12], [8, 13], [12, 12], [16, 10]], '#e09030'),
            v2: a('M3 5l12-1 1 9-13 2z', '#f4f4fc', '#555') + dots([[3, 5], [15, 4], [16, 13], [3, 15]], '#8c2850'), v3: mesh('#d4ecdc', '#5ca080'),
            v4: a('M2 9l5-5h6l2 8-4 3H3z', '#b8dcf8', '#6890c8') + a('M9 2h7v7H9z', '#5c98dc') + a('M8 8h6v5H8z', '#f8e070') + p('M1 15l11 1 3-4', '#5068b0', 1.500),
            v5: p('M2 5h14M3 12h13M5 3l-1 13M13 2l1 14M9 5v7', '#38a0a8', 1.600), v6: p('M2 12c3-8 9-9 12-7M3 13l12 3M4 6l7 7', '#555', 1.300) + dots([[3, 12], [11, 9], [15, 15]], '#c83c30'),
            v7: a('M1 11l7-6 9 2-7 7z', '#f4b038') + a('M1 11l9 3v3l-9-3zM10 14l7-7v3l-7 6z', '#555'), v8: a('M1 5l6 2v7l-6-2z', '#5078c0') + a('M7 8l9-3v9l-9 1z', '#d8ae70') + a('M7 7l5 3-5 4z', '#98c0f0'),
            v9: a('M2 8l6-5 9 4-6 6z', '#f4e4e4', '#a06070') + a('M3 10h5v4H3zM10 8h4v4h-4z', '#68a894') + dots([[6, 5], [13, 9]], '#c84848'), v10: p('M4 3h10M9 4v7', '#e0902c', 2.400) + a('M2 15l4-4h8l2 4z', '#c85838', '#803820'), v11: a('M1.500 8l7-5 3 2-7 5zM6.500 12l7-5 3 2-7 5z', '#f0dce4', '#a8607c') + p('M2 9l4 4M9 4l5 3', '#6878b0'),
            v12: o(9, 7, 6, '#68b878') + a('M9 1a6 6 0 0 1 6 6H9z', '#f0d048') + a('M3 7h6V1a6 6 0 0 0-6 6z', '#58b4e0') + a('M3 11l6 1-3 5z', '#8444c8'), v13: a('M2 10l5-7 10 4-5 8z', '#fbe8ec', '#c07080') + p('M5 7l9 4M10 4l-5 8', '#c07080') + a('M5 5l3-3 9 4-3 3z', '#d84858'),
            v14: o(9, 9, 6.500, '#d4dce8', '#5c78a8') + p('M3 7l9-3v9l-7 1z', '#5c78a8', 1.500) + a('M6 8h5v4H6z', '#fff'),
            v15: p('M3 15l-1-9 5 0 9 4-6 5z', '#844878', 1.300) + a('M4 9l6-1 3 3-6 4z', '#f8dc80') + dots([[6, 4], [16, 9], [10, 15], [3, 15], [2, 7]], '#b07838'), v16: mesh('#e8dcec', '#804c78'),
            v17: a('M2 4h4v11H2zM12 4h4v11h-4z', '#98b8ec', '#5878b8') + a('M7 5h4v8H7z', '#e8c898') + p('M9 1v16', '#667'),
            w1: mesh('#f4e8ec', '#784468') + dots([[2, 10], [8, 3], [16, 8], [10, 15]], '#982850'), w2: mesh('#e8dce8', '#683c78') + dots([[2, 9], [9, 3], [15, 8], [9, 14], [8, 8]], '#883070'), w3: mesh('#e8ecf8', '#6870b0'),
            w4: curved('#7ca0ec', '#8ca0d0') + p('M3 6c4 1 8 1 12 2', '#c8d8fc', 2), w5: curved('#88a8f0', '#4c64b8') + p('M6 5l1 6M11 5v8', '#28409c'), w6: curved('#88a8f0', '#4c64b8') + p('M6 5l1 6M11 5v8M2 8c4 1 9 1 13 3', '#28409c'),
            w7: a('M2 5l5-3 9 4v8l-8 2z', '#faf0e8', '#b07858') + dots([[3, 6], [8, 15], [15, 7]], '#d87838'), w8: a('M1 11L12 2l5 3L6 15z', '#f8e4a0', '#86608c') + p('M3 12L14 4', '#86608c'), w9: a('M2 5l9-3 5 8-8 6z', '#f8f0d0', '#8890b8') + o(8, 9, 3, '#f4e060'),
            w10: a('M3 3h12v9H3z', '#b8ccf4', '#5068b0') + p('M2 15c4-4 8-4 14 0M5 6h7', '#5068b0', 1.500), w11: a('M2 8l7 1 6 5-7 2z', '#f4c048') + p('M14 1L9 11', '#5078b8', 1.800) + a('M5 8l4-4 2 5z', '#f8a850'),
            w12: a('M3 3l13 4-2 8-12-4z', '#f4f4fc', '#7058a0') + p('M5 6l8 3M4 9l9 3', '#8870b8', 1.500), w13: a('M2 6l7-2v9l-7 2zM9 4l7-1v9l-7 1z', '#8cb0f0', '#4868b8') + a('M5 6l4 3-4 4z', '#fff'), w14: a('M3 6l6-4 7 2-5 4z', '#60b890') + a('M3 6l8 2v8l-8-3z', '#f8b048') + a('M11 8l5-4v8l-5 4z', '#e07c28'),
            w15: a('M2 2h6v7H2z', '#5884e0') + a('M9 5h6v10H7v-4h2z', '#f0b040', '#c89040') + a('M3 10h5v6H3z', '#f8dc90', '#c8a050'), w16: a('M2 6l9-3 5 3-8 3z', '#f8d060', '#b09038') + dots([[13, 10], [14, 15]], '#d03848') + p('M3 9h9', '#7c9cdc', 2),
            w17: a('M3 9l6-6 7 4-5 7z', '#f0e0e8', '#8888b8') + a('M2 11l5-3 8 3-5 5z', '#5c94ec'), w18: a('M10 1h7v15H2v-5c6 0 8-3 8-10z', '#f8b428') + a('M2 12h9v4H2z', '#e08418'), w19: a('M2 8c4 1 5-3 13-2v8c-6-1-8 3-12 1z', '#f0eafa', '#8878c0') + p('M12 7l4-5', '#d84040', 2),

            navasm: p('M3 8v8M3 12h13M8 16h8', '#222') + a('M1.500 2.500h5v4h-5zM8.500 7.500h5v3h-5zM9.500 13.500h5v3h-5z', '#f4f040', '#888820') + p('M6 6l4 2', '#666'),
            navpart: p('M3 7v10M3 10h13M3 15h4M9 15h7', '#444') + a('M1.500 1.500h4v5h-4z', '#fbe4ec', '#b84868') + a('M7.500 12.500h4v4h-4z', '#ddd', '#777'),
            web: a('M3.500 1.500h8l4 4v11h-12z', '#fafadc', '#a8a868') + o(9, 10, 4.500, '#4888c0') + a('M6 8l4-2 2 3-4 3z', '#58b060'),
            clock: o(9, 9, 7, '#b8d0ec', '#7c98b8') + o(9, 9, 4.800, '#f8fbff') + p('M9 5v4h4', '#446'), roles: a('M2.500 3.500l4-1v13l-4-1z', '#9cb8e0', '#446') + a('M6.500 2.500h9v12h-9z', '#fff', '#446') + p('M8 6h2M8 9h2M8 12h2', '#222', 2) + p('M11 6h3M11 9h3M11 12h3', '#999'),
            palette: a('M1 0h7v4H1z', '#f03020') + a('M1 4h7v4H1z', '#f8e020') + a('M1 8h7v4H1z', '#30d050') + a('M1 12h7v5H1z', '#30a8f0') + p('M10 8l5 8', '#3848a8', 2), process: p('M2 4v8M5 5v8M2 8h8l6-5M9 9l7 6', '#282c88', 2.200) + a('M7 5h6l-2 4z', '#e8e090'),
            people: o(12, 4, 3, '#e8a040') + a('M8 14c0-8 9-8 9-1z', '#48a058') + o(6, 7, 3.500, '#c06840') + a('M1 17c0-8 10-8 10 0z', '#8c50c0'), scene: a('M1.500 3.500h15v12h-15z', '#3c78cc', '#223c70') + a('M2 12c5-4 9-1 14-3v6H2z', '#c8e0f4') + o(13, 6, 2, '#f8e860')
        }

        const svg = name => `<svg class="w-[18px] h-[18px] overflow-visible" viewBox="0 0 18 18">${icons[name]}</svg>`
        const arrow = '<svg class="w-[7px] h-[4px]" viewBox="0 0 7 4"><path d="M0 0h7L3.500 4z"/></svg>'

        // tokens: "|" separator, "drop" split arrow, "end" toolbar options
        const special = {
            '|': '<i class="w-1.5 h-[22px] flex justify-center"><b class="w-0.5 h-full bg-white border-l border-[#b4b4b4]"></b></i>',
            drop: `<button aria-label="更多" class="w-3 h-full flex items-center justify-center">${arrow}</button>`,
            end: `<button aria-label="工具条选项" class="w-3 h-full flex items-end justify-center pb-1">${arrow}</button>`,
            start: `<button class="w-[59px] h-full flex items-center gap-0.5 pl-0.5 whitespace-nowrap">${svg('globe')}<span class="w-6">开始</span><span class="pl-1">${arrow}</span></button>`,
            layer: `<div class="relative w-[39px] h-4 mx-[3px]"><select aria-label="工作图层" class="block appearance-none w-full h-4 rounded-[3px] border border-[#47698c] bg-white pl-1 text-[12px] leading-3"><option>1</option></select>
                <svg class="absolute right-px top-px w-4 h-3.5 pointer-events-none" viewBox="0 0 16 14"><path fill="#6fa3d4" d="M0 0h16v14H0z"/><path d="M3 4h10l-5 6z"/></svg></div>`
        }
        const tool = name => special[name] || `<button aria-label="${name}" class="w-[23px] h-full flex items-center justify-center">${svg(name)}</button>`
        const row = str => str.split(' ').map(tool).join('')

        document.querySelectorAll('[data-tools]').forEach(el => el.innerHTML = row(el.dataset.tools))
        document.querySelectorAll('[data-icon]').forEach(el => el.innerHTML = svg(el.dataset.icon))

        document.querySelectorAll('[data-bar]').forEach(el => {
            el.className = 'flex items-center shrink-0 border-t border-t-white border-r border-r-[#b4b4b4]'
            el.innerHTML = '<i class="w-[7px] flex justify-center"><b class="h-4 border-l-2 border-dotted border-[#a0a0a0]"></b></i>' + row(el.dataset.bar)
        })

        document.querySelectorAll('[data-dock]').forEach(el => {
            el.className = 'flex flex-col items-center bg-[#d9d9d9] border-r border-r-white border-b border-b-[#aaa]'
            el.innerHTML = '<i class="h-[7px] pt-[3px]"><b class="block w-3.5 border-t-2 border-dotted border-[#a0a0a0]"></b></i>' + el.dataset.dock.split(' ').map(name => {
                if (name === '|') return '<i class="h-1.5 w-full flex items-center"><b class="w-full h-0.5 bg-white border-t border-[#b4b4b4]"></b></i>'
                if (name === 'end') return '<button aria-label="工具条选项" class="h-3 w-full flex items-center pl-1.5"><svg class="w-1 h-[7px]" viewBox="0 0 4 7"><path d="M4 0v7L0 3.500z"/></svg></button>'
                return `<button aria-label="${name}" class="w-[23px] h-[23px] flex items-center justify-center">${svg(name)}</button>`
            }).join('')
        })

        document.querySelectorAll('[data-tabs]').forEach(el => {
            el.innerHTML = el.dataset.tabs.split(' ').map(name =>
                `<button aria-label="${name}" class="w-[21px] h-8 flex items-center justify-center bg-[#dadada] border border-[#555] border-t-white">${svg(name)}</button>`).join('')
        })

        const menus = [['文件', 'F'], ['编辑', 'E'], ['视图', 'V'], ['插入', 'S'], ['格式', 'R'], ['工具', 'T'], ['装配', 'A'], ['信息', 'I'], ['分析', 'L'], ['首选项', 'P'], ['窗口', 'O'], ['帮助', 'H']]
        document.getElementById('menus').innerHTML = menus.map(([name, key]) =>
            `<button class="flex items-center whitespace-nowrap leading-4">${name}<span class="text-[11px]">(<u>${key}</u>)</span></button>`).join('')
    </script>
</body>
</html>
